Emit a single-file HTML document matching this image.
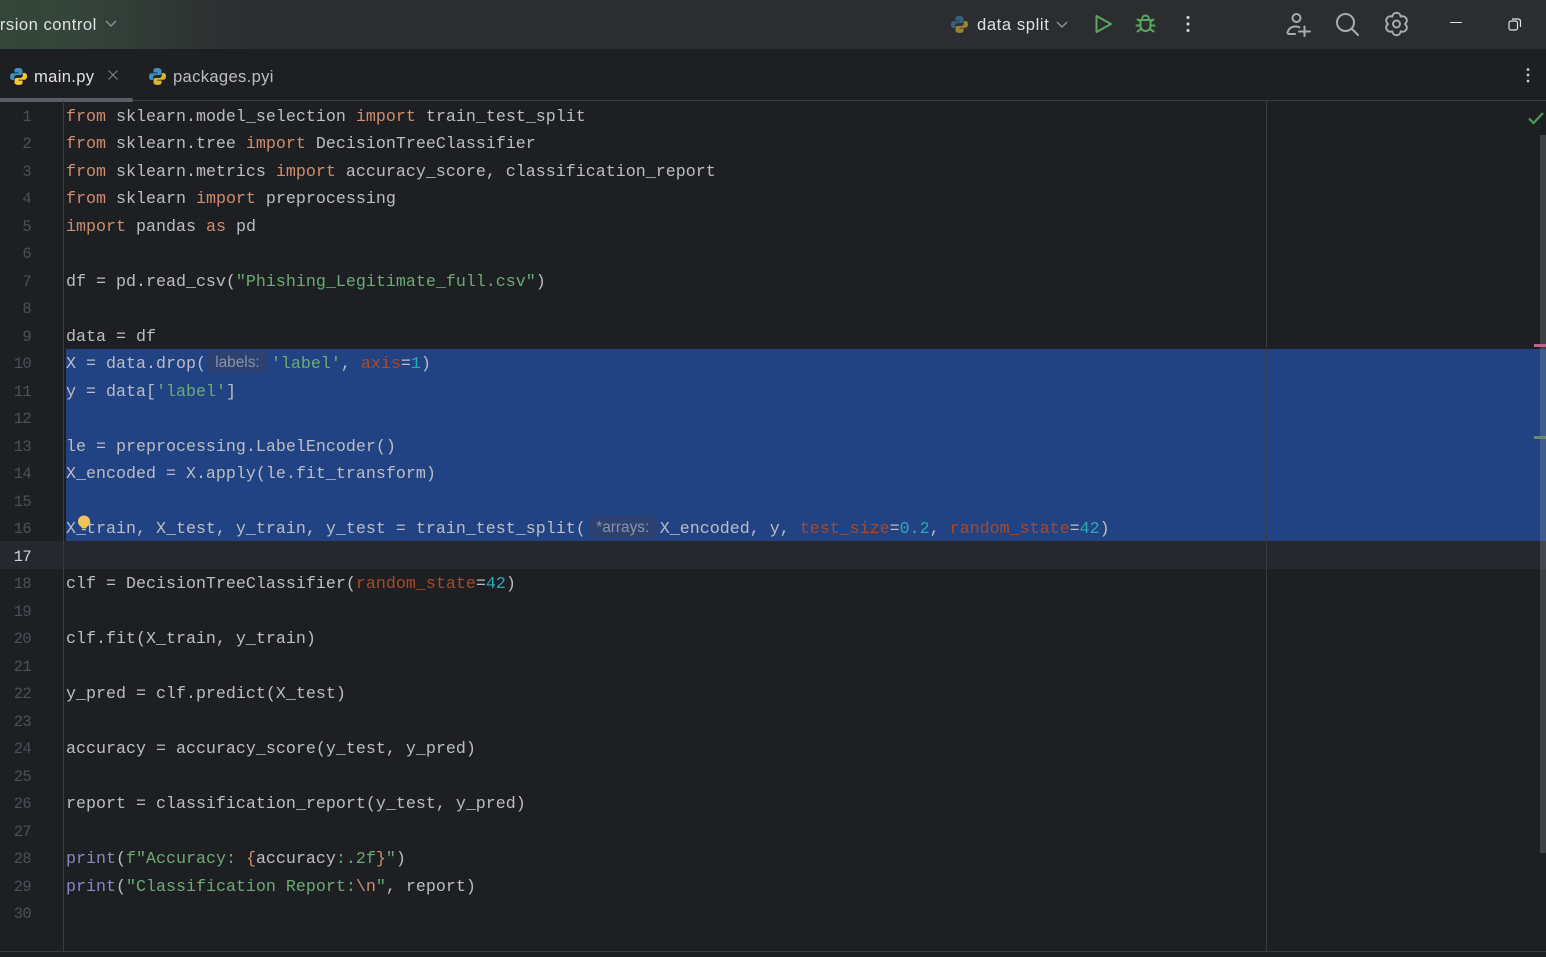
<!DOCTYPE html>
<html><head><meta charset="utf-8"><style>
html,body{margin:0;padding:0;width:1546px;height:957px;overflow:hidden;background:#1e1f22}
#a{position:relative;width:1546px;height:957px;overflow:hidden;background:#1e1f22}
.abs{position:absolute}
.t{position:absolute;font-family:"Liberation Sans",sans-serif;font-size:16.6px;line-height:20px;white-space:nowrap;color:#dfe1e5}
.l{position:absolute;left:66px;height:27.5px;line-height:27.5px;font-family:"Liberation Mono",monospace;font-size:16.67px;color:#bcbec4;white-space:pre}
.n{position:absolute;left:0;width:31px;text-align:right;height:27.5px;line-height:27.5px;font-family:"Liberation Mono",monospace;font-size:15.4px;letter-spacing:-.6px;color:#4b5059}
.k{color:#cf8e6d}.s{color:#6aab73}.d{color:#2aacb8}.a{color:#aa4926}.p{color:#8888c6}
.h{display:inline-block;height:22px;line-height:23px;vertical-align:1px;background:#2d4270;border-radius:4px;color:#8a93a3;font-family:"Liberation Sans",sans-serif;font-size:15.4px;text-align:center;margin:0 4px 0 2px}
svg{position:absolute;overflow:visible}
</style></head><body><div id="a">
<div class="abs" style="left:0;top:0;width:1546px;height:49px;background:linear-gradient(90deg,#34473a 0,#35453a 70px,#323d37 130px,#2e3433 190px,#2b2d30 260px)"></div>
<div class="t" style="left:-20.5px;top:15px;letter-spacing:.5px;color:#dfe1e5">Version control</div>
<svg style="left:105px;top:19px" width="12" height="10" fill="none" stroke="#8f9297" stroke-width="1.4"><path d="M1 2l5 5 5-5"/></svg>

<svg style="left:950px;top:15px;opacity:.55" width="19" height="19" viewBox="0 0 19 19"><path fill="#3d8fc4" d="M9.3 1C6.5 1 5.4 2 5.4 3.6V5.500h4.200v.8H3.500C2 6.300 1 7.600 1 9.600c0 2.100 1 3.400 2.500 3.400h1.700v-2.200c0-1.500 1.200-2.700 2.700-2.700h3.500c1.200 0 2.100-1 2.100-2.200V3.600C13.500 2 11.900 1 9.300 1z"/><path fill="#f5c92e" d="M9.700 18c2.800 0 3.900-1 3.900-2.600v-1.900H9.400v-.8h6.100c1.500 0 2.500-1.300 2.500-3.300 0-2.100-1-3.400-2.500-3.400h-1.700v2.200c0 1.500-1.200 2.700-2.700 2.700H7.600c-1.200 0-2.100 1-2.100 2.200v2.300C5.500 17 7.100 18 9.700 18z"/></svg>
<div class="t" style="left:977px;top:15px;letter-spacing:.6px">data split</div>
<svg style="left:1056px;top:20px" width="12" height="10" fill="none" stroke="#8f9297" stroke-width="1.4"><path d="M1 2l5 5 5-5"/></svg>
<svg style="left:1094px;top:14px" width="20" height="20" fill="none" stroke="#57a85f" stroke-width="2" stroke-linejoin="round"><path d="M2.500 2v16L17 10z"/></svg>
<svg style="left:1135px;top:13px" width="21" height="20" fill="none" stroke="#57a85f" stroke-width="2" stroke-linecap="round"><path d="M5.500 7h10v6a5 5 0 0 1-10 0zM7 7C7 4 8.500 2.500 10.500 2.500S14 4 14 7M5.500 8.500L2.500 6.500M5.500 12.500H1.500M6 16l-3.500 2.500M15.500 8.500l3-2M15.500 12.500h4M15 16l3.500 2.500"/></svg>
<svg style="left:1185px;top:15px" width="6" height="18" fill="#c9cbd0"><circle cx="3" cy="2.500" r="1.600"/><circle cx="3" cy="9" r="1.600"/><circle cx="3" cy="15.500" r="1.600"/></svg>
<svg style="left:1286px;top:12px" width="25" height="25" fill="none" stroke="#a9abb0" stroke-width="2" stroke-linecap="round"><circle cx="10.500" cy="6" r="4"/><path d="M2.500 22c-.8-.3-1.200-1-.8-2 1-3.500 4-5.500 7.800-5.500 1.500 0 2.800.3 3.800.8M2.500 22H9M13 19.500h11M18.500 14.500v9.500"/></svg>
<svg style="left:1335px;top:12px" width="25" height="25" fill="none" stroke="#a9abb0" stroke-width="2" stroke-linecap="round"><circle cx="10.500" cy="10.500" r="8.500"/><path d="M17 17l6 6"/></svg>
<svg style="left:1385px;top:12px" width="23" height="24" fill="none" stroke="#a9abb0" stroke-width="2"><g transform="translate(11.500,12)"><path stroke-linejoin="round" d="M-4.250-7.360C-3.360-12.560 3.360-12.560 4.250-7.360C9.190-9.190 12.560-3.360 8.500 0C12.560 3.360 9.190 9.190 4.250 7.360C3.360 12.560-3.360 12.560-4.250 7.360C-9.190 9.190-12.560 3.360-8.500 0C-12.560-3.360-9.190-9.190-4.250-7.360z"/><circle r="3.500"/></g></svg>
<div class="abs" style="left:1450px;top:22px;width:12px;height:1px;background:#dfe1e5"></div>
<svg style="left:1508px;top:18px" width="13" height="13" fill="none" stroke="#dfe1e5" stroke-width="1.200"><rect x="1" y="3" width="8.500" height="9" rx="2"/><path d="M4 1h6c1.500 0 2.500 1 2.500 2.500V9"/></svg>

<svg style="left:9px;top:67px" width="19" height="19" viewBox="0 0 19 19"><path fill="#3d8fc4" d="M9.300 1C6.500 1 5.400 2 5.400 3.600V5.500h4.200v.8H3.500C2 6.300 1 7.600 1 9.600c0 2.100 1 3.400 2.500 3.400h1.700v-2.200c0-1.500 1.200-2.700 2.700-2.700h3.500c1.200 0 2.100-1 2.100-2.200V3.600C13.500 2 11.900 1 9.300 1z"/><path fill="#f5c92e" d="M9.700 18c2.800 0 3.900-1 3.900-2.600v-1.900H9.400v-.8h6.100c1.500 0 2.500-1.300 2.500-3.300 0-2.100-1-3.400-2.500-3.400h-1.700v2.200c0 1.500-1.200 2.700-2.700 2.700H7.600c-1.200 0-2.100 1-2.100 2.200v2.300C5.500 17 7.100 18 9.700 18z"/></svg>
<div class="t" style="left:34px;top:67px;letter-spacing:.33px">main.py</div>
<svg style="left:108px;top:70px" width="10" height="10" stroke="#7b7e84" stroke-width="1.200"><path d="M.5.500l9 9M9.500.500l-9 9"/></svg>
<svg style="left:148px;top:67px" width="19" height="19" viewBox="0 0 19 19"><path fill="#3d8fc4" d="M9.300 1C6.500 1 5.400 2 5.400 3.600V5.500h4.200v.8H3.500C2 6.300 1 7.600 1 9.600c0 2.100 1 3.400 2.500 3.400h1.700v-2.200c0-1.500 1.200-2.700 2.700-2.700h3.500c1.200 0 2.100-1 2.100-2.200V3.600C13.500 2 11.900 1 9.300 1z"/><path fill="#d8b52e" d="M9.700 18c2.800 0 3.900-1 3.900-2.600v-1.900H9.400v-.8h6.100c1.500 0 2.500-1.300 2.500-3.300 0-2.100-1-3.400-2.500-3.400h-1.700v2.200c0 1.500-1.200 2.700-2.700 2.700H7.600c-1.200 0-2.100 1-2.100 2.200v2.300C5.500 17 7.100 18 9.700 18z"/></svg>
<div class="t" style="left:173px;top:67px;letter-spacing:.33px;color:#bcbec4">packages.pyi</div>
<svg style="left:1525px;top:67px" width="6" height="16" fill="#c9cbd0"><circle cx="3" cy="2.500" r="1.400"/><circle cx="3" cy="8" r="1.400"/><circle cx="3" cy="14" r="1.400"/></svg>
<div class="abs" style="left:0;top:100px;width:1546px;height:1px;background:#393b40"></div>
<div class="abs" style="left:0;top:98px;width:133px;height:3.500px;background:#5a5d63;border-radius:0 2px 2px 0"></div>

<div class="abs" style="left:0;top:541px;width:1546px;height:28px;background:#26282e"></div>
<div class="abs" style="left:66px;top:349px;width:1480px;height:192px;background:#214283"></div>
<div class="abs" style="left:63px;top:101px;width:1px;height:850px;background:#393b40"></div>
<div class="abs" style="left:1266px;top:101px;width:1px;height:850px;background:#393b40"></div>
<div class="abs" style="left:0;top:951px;width:1546px;height:1px;background:#393b40"></div>

<div class="n" style="top:104px">1</div><div class="n" style="top:131px">2</div><div class="n" style="top:159px">3</div><div class="n" style="top:186px">4</div><div class="n" style="top:214px">5</div><div class="n" style="top:241px">6</div><div class="n" style="top:269px">7</div><div class="n" style="top:296px">8</div><div class="n" style="top:324px">9</div><div class="n" style="top:351px">10</div><div class="n" style="top:379px">11</div><div class="n" style="top:406px">12</div><div class="n" style="top:434px">13</div><div class="n" style="top:461px">14</div><div class="n" style="top:489px">15</div><div class="n" style="top:516px">16</div><div class="n" style="top:544px;color:#d0d2d8">17</div><div class="n" style="top:571px">18</div><div class="n" style="top:599px">19</div><div class="n" style="top:626px">20</div><div class="n" style="top:654px">21</div><div class="n" style="top:681px">22</div><div class="n" style="top:709px">23</div><div class="n" style="top:736px">24</div><div class="n" style="top:764px">25</div><div class="n" style="top:791px">26</div><div class="n" style="top:819px">27</div><div class="n" style="top:846px">28</div><div class="n" style="top:874px">29</div><div class="n" style="top:901px">30</div>

<div class="l" style="top:104px"><span class="k">from</span> sklearn.model_selection <span class="k">import</span> train_test_split</div>
<div class="l" style="top:131px"><span class="k">from</span> sklearn.tree <span class="k">import</span> DecisionTreeClassifier</div>
<div class="l" style="top:159px"><span class="k">from</span> sklearn.metrics <span class="k">import</span> accuracy_score, classification_report</div>
<div class="l" style="top:186px"><span class="k">from</span> sklearn <span class="k">import</span> preprocessing</div>
<div class="l" style="top:214px"><span class="k">import</span> pandas <span class="k">as</span> pd</div>
<div class="l" style="top:269px">df = pd.read_csv(<span class="s">"Phishing_Legitimate_full.csv"</span>)</div>
<div class="l" style="top:324px">data = df</div>
<div class="l" style="top:351px">X = data.drop(<span class="h" style="width:59px">labels:</span><span class="s">'label'</span>, <span class="a">axis</span>=<span class="d">1</span>)</div>
<div class="l" style="top:379px">y = data[<span class="s">'label'</span>]</div>
<div class="l" style="top:434px">le = preprocessing.LabelEncoder()</div>
<div class="l" style="top:461px">X_encoded = X.apply(le.fit_transform)</div>
<div class="l" style="top:516px">X_train, X_test, y_train, y_test = train_test_split(<span class="h" style="width:68px;margin:0 3px 0 3px">*arrays:</span>X_encoded, y, <span class="a">test_size</span>=<span class="d">0.2</span>, <span class="a">random_state</span>=<span class="d">42</span>)</div>
<div class="l" style="top:571px">clf = DecisionTreeClassifier(<span class="a">random_state</span>=<span class="d">42</span>)</div>
<div class="l" style="top:626px">clf.fit(X_train, y_train)</div>
<div class="l" style="top:681px">y_pred = clf.predict(X_test)</div>
<div class="l" style="top:736px">accuracy = accuracy_score(y_test, y_pred)</div>
<div class="l" style="top:791px">report = classification_report(y_test, y_pred)</div>
<div class="l" style="top:846px"><span class="p">print</span>(<span class="s">f"Accuracy: </span><span class="k">{</span>accuracy<span class="s">:.2f</span><span class="k">}</span><span class="s">"</span>)</div>
<div class="l" style="top:874px"><span class="p">print</span>(<span class="s">"Classification Report:</span><span class="k">\n</span><span class="s">"</span>, report)</div>

<svg style="left:78px;top:515px" width="13" height="16"><circle cx="6" cy="6.500" r="6" fill="#f2c55c"/><rect x="3.500" y="12" width="5" height="1.300" fill="#f2c55c"/><rect x="4" y="14" width="4" height="1.200" fill="#f2c55c"/></svg>

<svg style="left:1528px;top:111px" width="16" height="14" fill="none" stroke="#499c54" stroke-width="2.200"><path d="M1 7.500l4.500 4.500L15 2"/></svg>
<div class="abs" style="left:1540px;top:135px;width:6px;height:718px;background:rgba(180,183,190,.22)"></div>
<div class="abs" style="left:1534px;top:344px;width:12px;height:3px;background:#c0648a"></div>
<div class="abs" style="left:1534px;top:436px;width:12px;height:3px;background:#6d8a6a"></div>
</div></body></html>
